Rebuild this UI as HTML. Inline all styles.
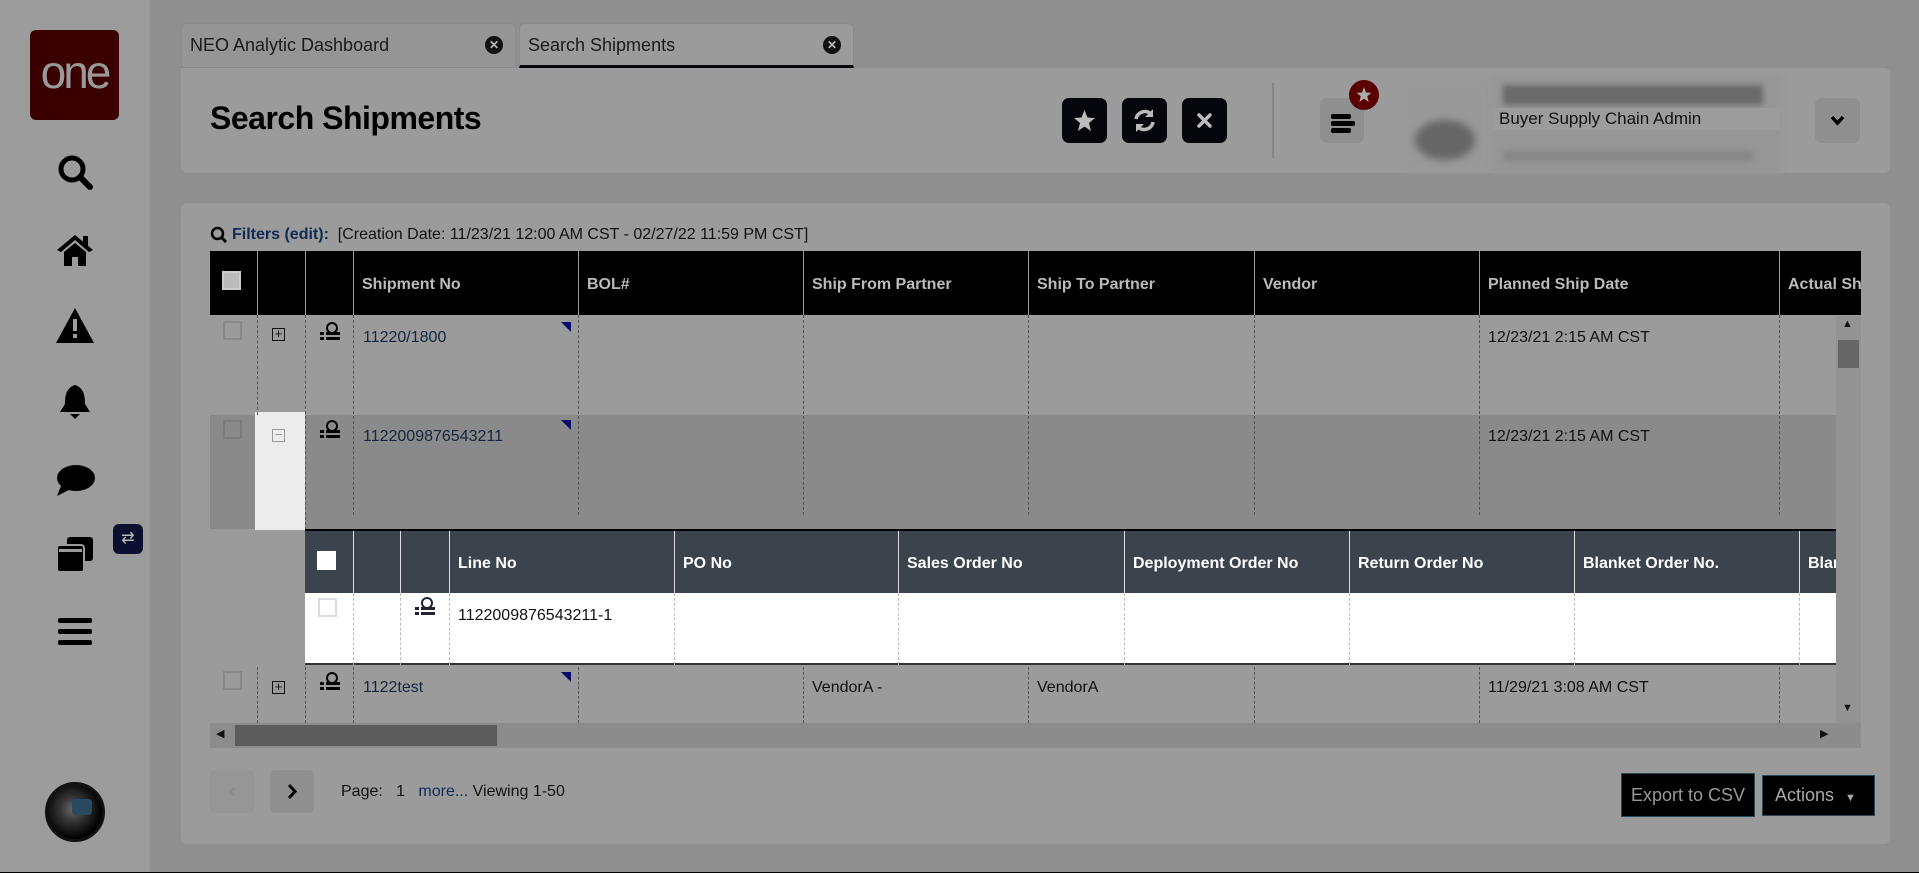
<!DOCTYPE html>
<html><head><meta charset="utf-8"><style>
*{box-sizing:border-box;margin:0;padding:0}
body{width:1919px;height:873px;overflow:hidden;background:#8f8f8f;font-family:"Liberation Sans",sans-serif;position:relative;color:#111}
.a{position:absolute}
#side{left:0;top:0;width:150px;height:872px;background:#9c9c9c}
.ic{position:absolute;left:55px;width:40px;height:40px}
.tab{position:absolute;top:23px;height:45px;background:#959595;border-radius:6px 6px 0 0;font-size:18px;padding:11px 8px;color:#1a1a1a;border:1px solid #8a8a8a}
.xc{position:absolute;right:12px;top:12px;width:18px;height:18px;border-radius:50%;background:#111;color:#bbb;font-size:12px;line-height:18px;text-align:center;font-weight:bold}
.panel{background:#9b9b9b;border-radius:6px}
.btn{position:absolute;top:98px;width:45px;height:45px;background:#05070d;border-radius:7px}
.th{position:absolute;top:251px;height:64px;background:#000}
.hc{position:absolute;top:0;height:64px;border-left:1px solid #999;color:#bbb;font-weight:bold;font-size:16px;padding:25px 0 0 8px;white-space:nowrap;overflow:hidden}
.vl{position:absolute;border-left:1px dashed #555}
.t{position:absolute;font-size:16px;white-space:nowrap}
.sh{position:absolute;top:531px;height:62px;background:#3b434d;left:305px;width:1531px}
.sc{position:absolute;top:0;height:62px;border-left:1px solid #ddd;color:#fff;font-weight:bold;font-size:16px;padding:24px 0 0 8px;white-space:nowrap;overflow:hidden}
.cb{position:absolute;width:19px;height:19px;border:2px solid #888;background:#9b9b9b}
.tri{position:absolute;width:0;height:0;border-top:10px solid #0a0a6a;border-left:10px solid transparent}
</style></head><body>
<div id="side" class="a">
 <div class="a" style="left:30px;top:30px;width:89px;height:90px;background:#3a0000;border-radius:6px;color:#999;font-size:46px;text-align:center;line-height:84px;letter-spacing:-3px">one</div>
 <svg class="ic" style="top:152px" viewBox="0 0 40 40"><circle cx="17" cy="17" r="11" fill="none" stroke="#000" stroke-width="5"/><line x1="25" y1="25" x2="35" y2="35" stroke="#000" stroke-width="6" stroke-linecap="round"/></svg>
 <svg class="ic" style="top:230px" viewBox="0 0 40 40"><path d="M2 20 L20 5 L38 20 L34 22 L20 10 L6 22Z M9 22 L20 13 L31 22 V36 H23 V27 H17 V36 H9Z M28 6h5v10l-5-4z" fill="#000"/></svg>
 <svg class="ic" style="top:305px" viewBox="0 0 40 40"><path d="M20 3 L39 38 H1Z" fill="#000"/><rect x="18" y="14" width="4" height="12" fill="#9c9c9c"/><rect x="18" y="29" width="4" height="4" fill="#9c9c9c"/></svg>
 <svg class="ic" style="top:382px" viewBox="0 0 40 40"><path d="M20 3 C11 6 10 14 10 22 L5 30 H35 L30 22 C30 14 29 6 20 3Z" fill="#000"/><path d="M15 32 H25 L20 37Z" fill="#000"/></svg>
 <svg class="ic" style="top:460px" viewBox="0 0 40 40"><ellipse cx="21" cy="18" rx="19" ry="13" fill="#000"/><path d="M6 26 L2 36 L14 30Z" fill="#000"/></svg>
 <svg class="ic" style="top:535px" viewBox="0 0 40 40"><rect x="12" y="2" width="26" height="24" rx="3" fill="#000"/><rect x="2" y="10" width="27" height="27" rx="3" fill="#000" stroke="#9c9c9c" stroke-width="2"/><rect x="4" y="14" width="23" height="3" fill="#9c9c9c"/></svg>
 <div class="a" style="left:113px;top:524px;width:30px;height:30px;background:#0b1030;border-radius:6px;color:#bbb;font-size:16px;text-align:center;line-height:30px">⇄</div>
 <svg class="ic" style="top:612px" viewBox="0 0 40 40"><rect x="3" y="6" width="34" height="5" rx="2" fill="#000"/><rect x="3" y="17" width="34" height="5" rx="2" fill="#000"/><rect x="3" y="28" width="34" height="5" rx="2" fill="#000"/></svg>
 <div class="a" style="left:45px;top:782px;width:60px;height:60px;border-radius:50%;background:radial-gradient(circle at 45% 45%,#666 0,#333 30%,#000 70%);border:3px solid #111"><div style="position:absolute;left:24px;top:14px;width:20px;height:16px;background:#2a4a60;border-radius:4px"></div></div>
</div>
<div class="tab" style="left:181px;width:335px">NEO Analytic Dashboard<span class="xc">✕</span></div>
<div class="tab" style="left:519px;width:335px;border-bottom:3px solid #05070d;background:#9b9b9b">Search Shipments<span class="xc">✕</span></div>
<div class="a panel" style="left:181px;top:68px;width:1709px;height:105px;border-radius:0 6px 6px 6px"></div>
<div class="a" style="left:210px;top:100px;font-size:32px;font-weight:bold;color:#000;letter-spacing:-0.5px">Search Shipments</div>
<div class="btn" style="left:1062px"><svg width="45" height="45" viewBox="0 0 45 45"><path d="M22.5 12 L25.5 19.5 L33 20 L27 25 L29 33 L22.5 28.5 L16 33 L18 25 L12 20 L19.5 19.5Z" fill="#bbb"/></svg></div>
<div class="btn" style="left:1122px"><svg width="45" height="45" viewBox="0 0 45 45"><path d="M14 21 A9 9 0 0 1 29 16" fill="none" stroke="#bbb" stroke-width="3.5"/><path d="M31 24 A9 9 0 0 1 16 29" fill="none" stroke="#bbb" stroke-width="3.5"/><path d="M31 11 V19 H23Z M14 34 V26 H22Z" fill="#bbb"/></svg></div>
<div class="btn" style="left:1182px"><svg width="45" height="45" viewBox="0 0 45 45"><path d="M17 17 L28 28 M28 17 L17 28" stroke="#bbb" stroke-width="3.5" stroke-linecap="round"/></svg></div>
<div class="a" style="left:1272px;top:83px;width:2px;height:75px;background:#858585"></div>
<div class="a" style="left:1320px;top:98px;width:44px;height:45px;background:#8f8f8f;border-radius:7px"><svg width="44" height="45"><rect x="11" y="16" width="20" height="5" rx="2"/><rect x="11" y="23" width="24" height="5" rx="2"/><rect x="11" y="30" width="20" height="5" rx="2"/></svg></div>
<div class="a" style="left:1349px;top:80px;width:30px;height:30px;border-radius:50%;background:#5a0000"><svg width="30" height="30"><path d="M15 7 L17 12.5 L22.5 12.8 L18.3 16.3 L19.7 22 L15 18.8 L10.3 22 L11.7 16.3 L7.5 12.8 L13 12.5Z" fill="#aaa"/></svg></div>
<div class="a" style="left:1403px;top:80px;width:90px;height:92px;background:#999;filter:blur(4px)"><div style="margin:40px 0 0 12px;width:60px;height:40px;border-radius:50%;background:#666"></div></div>
<div class="a" style="left:1493px;top:75px;width:287px;height:100px;background:#969696;filter:blur(3px)"><div style="margin:10px 0 0 10px;width:260px;height:20px;background:#6a6a6a"></div><div style="margin:45px 0 0 10px;width:250px;height:12px;background:#888"></div></div>
<div class="a" style="left:1493px;top:108px;width:287px;height:22px;background:#9c9c9c;font-size:17px;padding:1px 6px;color:#111">Buyer Supply Chain Admin</div>
<div class="a" style="left:1815px;top:98px;width:45px;height:45px;background:#8f8f8f;border-radius:7px"><svg width="45" height="45"><path d="M17 19 L22.5 25 L28 19" fill="none" stroke="#000" stroke-width="3.5"/></svg></div>

<div class="a panel" style="left:181px;top:203px;width:1709px;height:641px"></div>
<svg class="a" style="left:210px;top:226px" width="18" height="18"><circle cx="7.5" cy="7.5" r="5.5" fill="none" stroke="#000" stroke-width="2.5"/><line x1="11" y1="11" x2="16" y2="16" stroke="#000" stroke-width="3"/></svg>
<div class="t" style="left:232px;top:226px;font-size:16px"><b style="color:#0f2b55">Filters (edit):</b>&nbsp; [Creation Date: 11/23/21 12:00 AM CST - 02/27/22 11:59 PM CST]</div>
<div class="th" style="left:210px;width:1651px">
 <div class="cb" style="left:12px;top:20px;background:#bbb;border-color:#ccc"></div>
 <div class="hc" style="left:47px;width:48px"></div>
 <div class="hc" style="left:95px;width:48px"></div>
 <div class="hc" style="left:143px;width:225px">Shipment No</div>
 <div class="hc" style="left:368px;width:225px">BOL#</div>
 <div class="hc" style="left:593px;width:225px">Ship From Partner</div>
 <div class="hc" style="left:818px;width:226px">Ship To Partner</div>
 <div class="hc" style="left:1044px;width:225px">Vendor</div>
 <div class="hc" style="left:1269px;width:300px">Planned Ship Date</div>
 <div class="hc" style="left:1569px;width:82px">Actual Ship</div>
</div>
<div class="a" style="left:210px;top:415px;width:1626px;height:114px;background:#8a8a8a"></div>
<div class="a" style="left:255px;top:412px;width:50px;height:118px;background:#ececec"></div>
<div class="vl" style="left:257px;top:315px;height:100px"></div><div class="vl" style="left:305px;top:315px;height:215px"></div>
<div class="vl" style="left:353px;top:315px;height:200px"></div><div class="vl" style="left:578px;top:315px;height:200px"></div>
<div class="vl" style="left:803px;top:315px;height:200px"></div><div class="vl" style="left:1028px;top:315px;height:200px"></div>
<div class="vl" style="left:1254px;top:315px;height:200px"></div><div class="vl" style="left:1479px;top:315px;height:200px"></div>
<div class="vl" style="left:1779px;top:315px;height:200px"></div>
<div class="cb" style="left:223px;top:321px"></div><div class="cb" style="left:223px;top:420px;background:#8a8a8a;border-color:#7c7c7c"></div>
<div class="t" style="left:272px;top:328px;border:1.5px solid #111;width:13px;height:13px;font-size:13px;line-height:10px;text-align:center">+</div>
<div class="t" style="left:272px;top:429px;border:1.5px solid #999;width:13px;height:13px;font-size:13px;line-height:10px;text-align:center;color:#999">−</div>
<svg class="a" style="left:320px;top:322px" width="20" height="22"><circle cx="12" cy="6" r="5" fill="none" stroke="#000" stroke-width="2"/><rect x="0" y="10" width="4" height="3"/><rect x="6" y="10" width="14" height="3"/><rect x="0" y="15" width="4" height="3"/><rect x="6" y="15" width="14" height="3"/></svg>
<svg class="a" style="left:320px;top:420px" width="20" height="22"><circle cx="12" cy="6" r="5" fill="none" stroke="#000" stroke-width="2"/><rect x="0" y="10" width="4" height="3"/><rect x="6" y="10" width="14" height="3"/><rect x="0" y="15" width="4" height="3"/><rect x="6" y="15" width="14" height="3"/></svg>
<div class="tri" style="left:561px;top:322px"></div><div class="tri" style="left:561px;top:420px"></div>
<div class="t" style="left:363px;top:329px;color:#13253f">11220/1800</div>
<div class="t" style="left:363px;top:428px;color:#13253f">1122009876543211</div>
<div class="t" style="left:1488px;top:329px">12/23/21 2:15 AM CST</div>
<div class="t" style="left:1488px;top:428px">12/23/21 2:15 AM CST</div>
<div class="a" style="left:305px;top:529px;width:1531px;height:2px;background:#000"></div>
<div class="sh">
 <div class="cb" style="left:12px;top:20px;background:#fff;border-color:#fff"></div>
 <div class="sc" style="left:48px;width:47px"></div><div class="sc" style="left:95px;width:49px"></div>
 <div class="sc" style="left:144px;width:225px">Line No</div><div class="sc" style="left:369px;width:224px">PO No</div>
 <div class="sc" style="left:593px;width:226px">Sales Order No</div><div class="sc" style="left:819px;width:225px">Deployment Order No</div>
 <div class="sc" style="left:1044px;width:225px">Return Order No</div><div class="sc" style="left:1269px;width:225px">Blanket Order No.</div>
 <div class="sc" style="left:1494px;width:37px">Blanket</div>
</div>
<div class="a" style="left:305px;top:593px;width:1531px;height:72px;background:#fff;border-bottom:2px solid #333"></div>
<div class="a" style="left:1836px;top:531px;width:8px;height:134px;background:#eee"></div>
<div class="vl" style="left:353px;top:593px;height:72px;border-color:#bbb"></div><div class="vl" style="left:400px;top:593px;height:72px;border-color:#bbb"></div>
<div class="vl" style="left:449px;top:593px;height:72px;border-color:#bbb"></div><div class="vl" style="left:674px;top:593px;height:72px;border-color:#bbb"></div>
<div class="vl" style="left:898px;top:593px;height:72px;border-color:#bbb"></div><div class="vl" style="left:1124px;top:593px;height:72px;border-color:#bbb"></div>
<div class="vl" style="left:1349px;top:593px;height:72px;border-color:#bbb"></div><div class="vl" style="left:1574px;top:593px;height:72px;border-color:#bbb"></div>
<div class="vl" style="left:1799px;top:593px;height:72px;border-color:#bbb"></div>
<div class="cb" style="left:318px;top:598px;background:#fff;border-color:#ddd"></div>
<svg class="a" style="left:415px;top:597px" width="20" height="22"><circle cx="12" cy="6" r="5" fill="none" stroke="#223" stroke-width="2"/><rect x="0" y="10" width="4" height="3" fill="#223"/><rect x="6" y="10" width="14" height="3" fill="#223"/><rect x="0" y="15" width="4" height="3" fill="#223"/><rect x="6" y="15" width="14" height="3" fill="#223"/></svg>
<div class="t" style="left:458px;top:607px">1122009876543211-1</div>
<div class="vl" style="left:257px;top:667px;height:56px"></div><div class="vl" style="left:305px;top:667px;height:56px"></div>
<div class="vl" style="left:353px;top:667px;height:56px"></div><div class="vl" style="left:578px;top:667px;height:56px"></div>
<div class="vl" style="left:803px;top:667px;height:56px"></div><div class="vl" style="left:1028px;top:667px;height:56px"></div>
<div class="vl" style="left:1254px;top:667px;height:56px"></div><div class="vl" style="left:1479px;top:667px;height:56px"></div>
<div class="vl" style="left:1779px;top:667px;height:56px"></div>
<div class="cb" style="left:223px;top:671px"></div>
<div class="t" style="left:272px;top:681px;border:1.5px solid #111;width:13px;height:13px;font-size:13px;line-height:10px;text-align:center">+</div>
<svg class="a" style="left:320px;top:672px" width="20" height="22"><circle cx="12" cy="6" r="5" fill="none" stroke="#000" stroke-width="2"/><rect x="0" y="10" width="4" height="3"/><rect x="6" y="10" width="14" height="3"/><rect x="0" y="15" width="4" height="3"/><rect x="6" y="15" width="14" height="3"/></svg>
<div class="tri" style="left:561px;top:672px"></div>
<div class="t" style="left:363px;top:679px;color:#13253f">1122test</div>
<div class="t" style="left:812px;top:679px">VendorA -</div>
<div class="t" style="left:1037px;top:679px">VendorA</div>
<div class="t" style="left:1488px;top:679px">11/29/21 3:08 AM CST</div>
<div class="a" style="left:1836px;top:316px;width:25px;height:407px;background:#939393"></div>
<div class="a" style="left:1838px;top:340px;width:21px;height:28px;background:#666"></div>
<div class="t" style="left:1842px;top:318px;font-size:11px">▲</div><div class="t" style="left:1842px;top:702px;font-size:11px">▼</div>
<div class="a" style="left:210px;top:723px;width:1651px;height:25px;background:#8c8c8c"></div>
<div class="a" style="left:235px;top:725px;width:262px;height:21px;background:#5c5c5c"></div>
<div class="t" style="left:216px;top:727px;font-size:11px">◀</div><div class="t" style="left:1820px;top:727px;font-size:11px">▶</div>
<div class="a" style="left:210px;top:770px;width:44px;height:43px;background:#969696;border-radius:5px;color:#8a8a8a;text-align:center;line-height:43px;font-size:18px">‹</div>
<div class="a" style="left:270px;top:770px;width:44px;height:43px;background:#8f8f8f;border-radius:5px"><svg width="44" height="43"><path d="M19 15 L25 21.5 L19 28" fill="none" stroke="#000" stroke-width="3"/></svg></div>
<div class="t" style="left:341px;top:783px">Page:&nbsp;&nbsp; 1 &nbsp; <span style="color:#0f2b55">more...</span> Viewing 1-50</div>
<div class="a" style="left:1621px;top:773px;width:134px;height:44px;background:#000;border:1px solid #2a4a5a;color:#999;font-size:18px;text-align:center;line-height:42px">Export to CSV</div>
<div class="a" style="left:1762px;top:775px;width:113px;height:41px;background:#000;border:1px solid #2a4a5a;color:#aaa;font-size:18px;line-height:39px;padding-left:12px">Actions <span style="font-size:11px;margin-left:6px">▼</span></div>
<div class="a" style="left:0;top:872px;width:1919px;height:1px;background:#000"></div>
</body></html>
